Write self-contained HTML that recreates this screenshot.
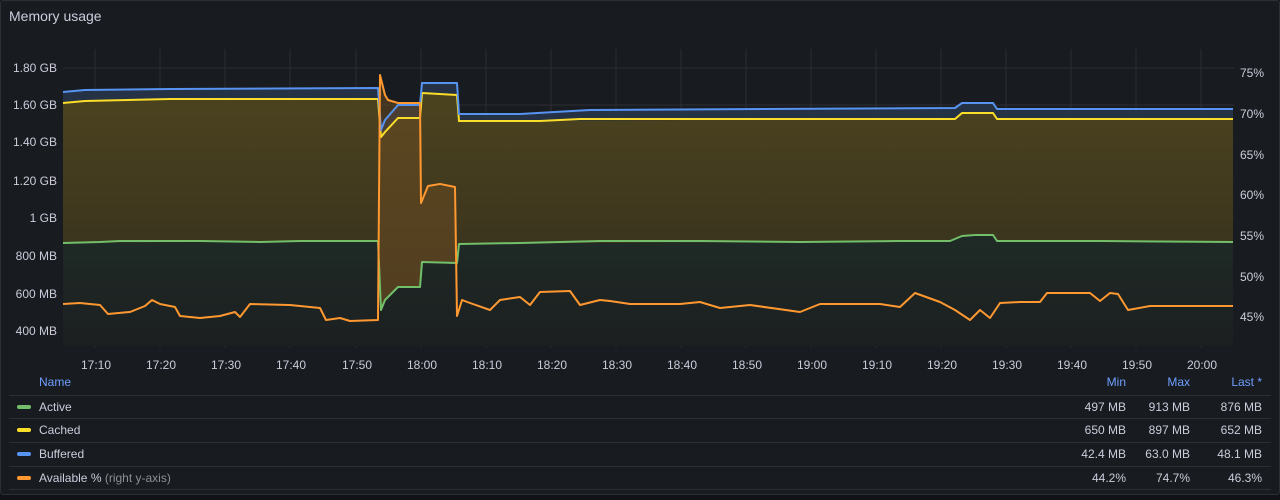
<!DOCTYPE html>
<html><head><meta charset="utf-8"><style>
html,body{margin:0;padding:0;background:#111217;}
body{width:1280px;height:500px;overflow:hidden;position:relative;font-family:"Liberation Sans",sans-serif;}
.panel{position:absolute;left:0;top:0;width:1278px;height:493px;background:#181b1f;border:1px solid #2c2f35;border-radius:3px;}
.title{position:absolute;left:9px;top:8px;color:#ccccdc;font-size:14px;font-weight:500;}
.t{position:absolute;color:#ccccdc;font-size:12px;white-space:nowrap;}
.r{text-align:right;}
.sep{position:absolute;left:9px;width:1262px;height:1px;background:#2c2f35;}
.sw{position:absolute;left:17px;width:14px;height:4px;border-radius:2px;}
.hd{position:absolute;color:#6e9fff;font-size:12px;}
</style></head><body>
<div class="panel"></div>
<div class="title">Memory usage</div>
<svg width="1280" height="500" style="position:absolute;left:0;top:0">
<defs>
<linearGradient id="gy" x1="0" y1="0" x2="0" y2="1"><stop offset="0" stop-color="#4b431f"/><stop offset="1" stop-color="#352f1d"/></linearGradient>
<linearGradient id="gg" x1="0" y1="0" x2="0" y2="1"><stop offset="0" stop-color="#1f2a26"/><stop offset="1" stop-color="#1c1f20"/></linearGradient>
</defs>
<g stroke="#2b2e33" stroke-width="1">
<line x1="63" y1="68" x2="1234" y2="68"/><line x1="63" y1="105" x2="1234" y2="105"/><line x1="63" y1="142" x2="1234" y2="142"/><line x1="63" y1="181" x2="1234" y2="181"/><line x1="63" y1="218" x2="1234" y2="218"/><line x1="63" y1="256" x2="1234" y2="256"/><line x1="63" y1="294" x2="1234" y2="294"/><line x1="63" y1="331" x2="1234" y2="331"/>
<line x1="95" y1="49" x2="95" y2="348"/><line x1="160" y1="49" x2="160" y2="348"/><line x1="225" y1="49" x2="225" y2="348"/><line x1="290" y1="49" x2="290" y2="348"/><line x1="356" y1="49" x2="356" y2="348"/><line x1="421" y1="49" x2="421" y2="348"/><line x1="486" y1="49" x2="486" y2="348"/><line x1="551" y1="49" x2="551" y2="348"/><line x1="616" y1="49" x2="616" y2="348"/><line x1="681" y1="49" x2="681" y2="348"/><line x1="746" y1="49" x2="746" y2="348"/><line x1="811" y1="49" x2="811" y2="348"/><line x1="876" y1="49" x2="876" y2="348"/><line x1="941" y1="49" x2="941" y2="348"/><line x1="1006" y1="49" x2="1006" y2="348"/><line x1="1071" y1="49" x2="1071" y2="348"/><line x1="1136" y1="49" x2="1136" y2="348"/><line x1="1201" y1="49" x2="1201" y2="348"/>
</g>
<!-- fills -->
<polygon fill="#273449" opacity="0.9" points="63,92 85,90 170,89 378,88 381,130 385,120 398,105 420,105 422,83 457,83 459,114 520,114 590,110 955,108 962,103 993,103 997,109 1233,109 1233,119 997,119 993,113 962,113 955,119 459,121 457,95 422,93 420,118 398,118 385,132 381,137 378,99 170,99 85,101 63,103"/>
<polygon fill="url(#gy)" points="63,103 85,101 170,99 378,99 381,137 385,132 398,118 420,118 422,93 457,95 459,121 955,119 962,113 993,113 997,119 1233,119 1233,242 997,241 993,235 962,236 950,241 459,244 457,263 422,262 420,287 398,287 385,300 381,310 378,241 63,243"/>
<polygon fill="url(#gg)" points="63,243 378,241 381,310 385,300 398,287 420,287 422,262 457,263 459,244 950,241 962,236 993,235 997,241 1233,242 1233,346 63,346"/>
<polygon fill="#6a4a22" opacity="0.55" points="378,320 380,75 385,95 388,100 398,103 420,103 421,203 428,186 455,187 457,316 457,263 422,262 420,287 398,287 385,300 381,310 378,241"/>
<!-- lines -->
<g fill="none" stroke-width="2" stroke-linejoin="round">
<polyline stroke="#73bf69" points="63,243 100,242 120,241 200,241 260,242 300,241 378,241 381,310 385,300 398,287 420,287 422,262 457,263 459,244 520,243 600,241 700,241 800,242 900,241 950,241 962,236 975,235 993,235 997,241 1100,241 1233,242"/>
<polyline stroke="#fade2a" points="63,103 85,101 170,99 378,99 381,137 385,132 398,118 420,118 422,93 457,95 459,121 540,121 580,119 955,119 962,113 993,113 997,119 1233,119"/>
<polyline stroke="#5794f2" points="63,92 85,90 170,89 378,88 381,130 385,120 398,105 420,105 422,83 457,83 459,114 520,114 590,110 955,108 962,103 993,103 997,109 1233,109"/>
<polyline stroke="#ff9830" points="63,304 80,303 100,305 108,314 130,312 145,306 152,300 160,304 175,307 180,316 200,318 220,316 235,312 240,317 250,304 290,305 320,308 326,320 340,318 350,321 378,320 380,75 385,95 388,100 398,103 420,103 421,203 428,186 440,184 455,187 457,316 462,300 470,303 490,310 500,300 520,297 530,305 540,292 570,291 580,305 600,300 610,301 630,304 680,304 700,302 720,308 750,305 800,312 820,304 880,304 900,307 915,293 940,302 955,310 970,320 980,310 990,318 1000,303 1020,302 1040,302 1047,293 1090,293 1100,301 1110,293 1118,294 1128,310 1150,306 1200,306 1233,306"/>
</g>
</svg>
<!-- left axis -->
<div class="t r" style="left:0;width:57px;top:61px">1.80 GB</div>
<div class="t r" style="left:0;width:57px;top:98px">1.60 GB</div>
<div class="t r" style="left:0;width:57px;top:135px">1.40 GB</div>
<div class="t r" style="left:0;width:57px;top:174px">1.20 GB</div>
<div class="t r" style="left:0;width:57px;top:211px">1 GB</div>
<div class="t r" style="left:0;width:57px;top:249px">800 MB</div>
<div class="t r" style="left:0;width:57px;top:287px">600 MB</div>
<div class="t r" style="left:0;width:57px;top:324px">400 MB</div>
<!-- right axis -->
<div class="t" style="left:1240px;top:66px">75%</div>
<div class="t" style="left:1240px;top:107px">70%</div>
<div class="t" style="left:1240px;top:148px">65%</div>
<div class="t" style="left:1240px;top:188px">60%</div>
<div class="t" style="left:1240px;top:229px">55%</div>
<div class="t" style="left:1240px;top:270px">50%</div>
<div class="t" style="left:1240px;top:310px">45%</div>
<!-- x axis -->
<div class="t" style="left:81px;top:358px">17:10</div><div class="t" style="left:146px;top:358px">17:20</div><div class="t" style="left:211px;top:358px">17:30</div><div class="t" style="left:276px;top:358px">17:40</div><div class="t" style="left:342px;top:358px">17:50</div><div class="t" style="left:407px;top:358px">18:00</div><div class="t" style="left:472px;top:358px">18:10</div><div class="t" style="left:537px;top:358px">18:20</div><div class="t" style="left:602px;top:358px">18:30</div><div class="t" style="left:667px;top:358px">18:40</div><div class="t" style="left:732px;top:358px">18:50</div><div class="t" style="left:797px;top:358px">19:00</div><div class="t" style="left:862px;top:358px">19:10</div><div class="t" style="left:927px;top:358px">19:20</div><div class="t" style="left:992px;top:358px">19:30</div><div class="t" style="left:1057px;top:358px">19:40</div><div class="t" style="left:1122px;top:358px">19:50</div><div class="t" style="left:1187px;top:358px">20:00</div>
<!-- legend -->
<div class="hd" style="left:39px;top:375px">Name</div>
<div class="hd r" style="left:1060px;width:66px;top:375px">Min</div>
<div class="hd r" style="left:1124px;width:66px;top:375px">Max</div>
<div class="hd r" style="left:1196px;width:66px;top:375px">Last *</div>
<div class="sep" style="top:395px"></div>
<div class="sw" style="top:405px;background:#73bf69"></div><div class="t" style="left:39px;top:400px">Active</div>
<div class="t r" style="left:1040px;width:86px;top:400px">497 MB</div><div class="t r" style="left:1104px;width:86px;top:400px">913 MB</div><div class="t r" style="left:1176px;width:86px;top:400px">876 MB</div>
<div class="sep" style="top:418px"></div>
<div class="sw" style="top:428px;background:#fade2a"></div><div class="t" style="left:39px;top:423px">Cached</div>
<div class="t r" style="left:1040px;width:86px;top:423px">650 MB</div><div class="t r" style="left:1104px;width:86px;top:423px">897 MB</div><div class="t r" style="left:1176px;width:86px;top:423px">652 MB</div>
<div class="sep" style="top:442px"></div>
<div class="sw" style="top:452px;background:#5794f2"></div><div class="t" style="left:39px;top:447px">Buffered</div>
<div class="t r" style="left:1040px;width:86px;top:447px">42.4 MB</div><div class="t r" style="left:1104px;width:86px;top:447px">63.0 MB</div><div class="t r" style="left:1176px;width:86px;top:447px">48.1 MB</div>
<div class="sep" style="top:466px"></div>
<div class="sw" style="top:476px;background:#ff9830"></div><div class="t" style="left:39px;top:471px">Available % <span style="color:#8e8e98">(right y-axis)</span></div>
<div class="t r" style="left:1040px;width:86px;top:471px">44.2%</div><div class="t r" style="left:1104px;width:86px;top:471px">74.7%</div><div class="t r" style="left:1176px;width:86px;top:471px">46.3%</div>
<div class="sep" style="top:489px"></div>
</body></html>
